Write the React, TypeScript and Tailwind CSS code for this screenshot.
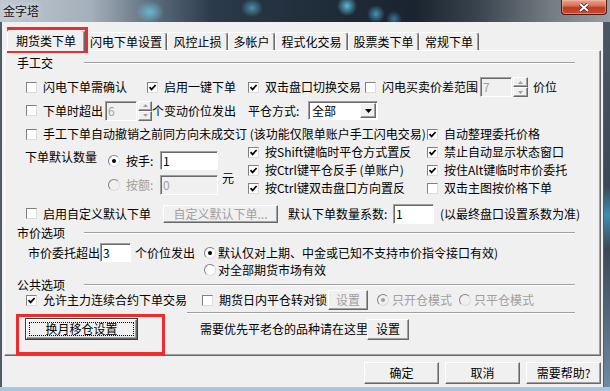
import React from 'react'

type Kids = { children?: React.ReactNode; className?: string }

function Box({ checked }: { checked?: boolean }) {
  return (
    <span className="flex h-[11px] w-[11px] shrink-0 items-center justify-center border border-t-[#808080] border-l-[#808080] border-r-[#dcdcdc] border-b-[#dcdcdc] bg-white">
      {checked && (
        <svg width="9" height="9" viewBox="0 0 9 9">
          <path d="M1.5 4.2 3.6 6.4 7.6 2" fill="none" stroke="#000" strokeWidth="1.7" />
        </svg>
      )}
    </span>
  )
}

function Radio({ checked, disabled }: { checked?: boolean; disabled?: boolean }) {
  return (
    <span
      className={`flex h-[12px] w-[12px] shrink-0 items-center justify-center rounded-full border border-t-[#808080] border-l-[#808080] border-r-[#dcdcdc] border-b-[#dcdcdc] ${disabled ? 'bg-[#f0f0f0]' : 'bg-white'}`}
    >
      {checked && <span className={`h-[4px] w-[4px] rounded-full ${disabled ? 'bg-[#a0a0a0]' : 'bg-black'}`} />}
    </span>
  )
}

function Check({ label, checked, className = '' }: { label: string; checked?: boolean; className?: string }) {
  return (
    <div className={`flex shrink-0 items-center whitespace-nowrap ${className}`}>
      <Box checked={checked} />
      <span className="ml-[6px]">{label}</span>
    </div>
  )
}

function Field({ value, disabled, className = '' }: { value: string; disabled?: boolean; className?: string }) {
  return (
    <div
      className={`flex shrink-0 items-center border border-t-[#a0a0a0] border-l-[#a0a0a0] border-r-white border-b-white pl-[2px] shadow-[inset_1px_1px_0_#696969] ${disabled ? 'bg-[#f0f0f0] text-[#a0a0a0]' : 'bg-white text-black'} ${className}`}
    >
      {value}
    </div>
  )
}

function SpinBtn({ up }: { up?: boolean }) {
  return (
    <div className="flex flex-1 items-center justify-center border border-t-white border-l-white border-r-[#696969] border-b-[#696969] bg-[#f0f0f0] shadow-[inset_-1px_-1px_0_#a0a0a0]">
      <svg width="5" height="3" viewBox="0 0 5 3">
        <path d={up ? 'M0 3h5L2.5 0z' : 'M0 0h5L2.5 3z'} fill="#a0a0a0" />
      </svg>
    </div>
  )
}

function Spin({ className = '' }: { className?: string }) {
  return (
    <div className={`flex shrink-0 flex-col ${className}`}>
      <SpinBtn up />
      <SpinBtn />
    </div>
  )
}

function Btn({ children, disabled, className = '' }: Kids & { disabled?: boolean }) {
  return (
    <div
      className={`flex shrink-0 items-center justify-center border border-t-white border-l-white border-r-[#696969] border-b-[#696969] bg-[#f0f0f0] shadow-[inset_-1px_-1px_0_#a0a0a0] whitespace-nowrap ${disabled ? 'text-[#a0a0a0]' : 'text-black'} ${className}`}
    >
      {children}
    </div>
  )
}

function DefaultBtn({ children, className = '' }: Kids) {
  return (
    <div className={`flex shrink-0 border border-[#3c3c3c] bg-[#f0f0f0] ${className}`}>
      <div className="flex flex-1 border border-t-white border-l-white border-r-[#696969] border-b-[#696969] p-[2px] shadow-[inset_-1px_-1px_0_#a0a0a0]">
        <div className="flex flex-1 items-center justify-center border border-dotted border-black">{children}</div>
      </div>
    </div>
  )
}

function Group({ label, className = '' }: { label: string; className?: string }) {
  return (
    <div className={`flex items-center pl-[12px] ${className}`}>
      <span className="w-[67px] shrink-0">{label}</span>
      <div className="h-[2px] w-[491px] border-t border-b border-t-[#a0a0a0] border-b-white" />
    </div>
  )
}

function Tab({ label, active, className = '' }: { label: string; active?: boolean; className?: string }) {
  return (
    <div
      className={`flex shrink-0 items-center justify-center rounded-t-[3px] border border-b-0 border-t-white border-l-white border-r-[#696969] bg-[#f0f0f0] shadow-[inset_-1px_0_0_#a0a0a0] ${active ? 'relative z-10 -mb-[1px] h-[21px]' : 'h-[18px]'} ${className}`}
    >
      {label}
    </div>
  )
}

export default function App() {
  return (
    <div className="relative flex h-[391px] w-[610px] flex-col overflow-hidden whitespace-nowrap bg-[#56636f] font-['Noto_Sans_CJK_SC',sans-serif] text-[12px] leading-[14px] text-black">
      {/* title bar */}
      <div className="flex h-[22px] shrink-0 items-start bg-[radial-gradient(ellipse_14px_11px_at_150px_12px,rgba(110,200,230,0.8),transparent),radial-gradient(ellipse_11px_9px_at_252px_8px,rgba(90,180,215,0.7),transparent),radial-gradient(ellipse_10px_10px_at_347px_6px,rgba(100,200,230,0.9),transparent),radial-gradient(ellipse_9px_9px_at_376px_14px,rgba(80,175,215,0.8),transparent),radial-gradient(ellipse_8px_8px_at_394px_19px,rgba(70,150,205,0.7),transparent),linear-gradient(90deg,#bfc8d0_0%,#a3afba_15%,#5e6e7e_25%,#2a3a4a_35%,#1e2b38_55%,#1a2430_68%,#38434d_78%,#737b82_90%,#989ea3_100%)]">
        <span className="ml-[3px] mt-[4px] text-[#111] [text-shadow:0_0_6px_#ffffff]">金字塔</span>
        <div className="ml-auto mr-[3px] flex h-[15px] w-[46px] items-center justify-center rounded-b-[4px] border border-t-0 border-[#4a1c14] bg-[linear-gradient(180deg,#e9a493_0%,#d8735d_40%,#c13b22_55%,#cc4a31_100%)] shadow-[inset_0_0_0_1px_rgba(255,200,180,0.45)]">
          <svg width="12" height="9" viewBox="0 0 12 9">
            <path d="M2 1l8 7M10 1L2 8" stroke="#3a2a2a" strokeWidth="3.4" />
            <path d="M2 1l8 7M10 1L2 8" stroke="#fff" strokeWidth="2" />
          </svg>
        </div>
      </div>

      <div className="flex flex-1">
        <div className="w-[2px] bg-[#4f5c69]" />

        {/* client area */}
        <div className="flex w-[601px] flex-col bg-[#f0f0f0]">
          <div className="mt-[8px] flex h-[20px] items-end pl-[5px]">
            <Tab label="期货类下单" active className="w-[78px]" />
            <Tab label="闪电下单设置" className="w-[82px]" />
            <Tab label="风控止损" className="w-[61px]" />
            <Tab label="多帐户" className="w-[47px]" />
            <Tab label="程式化交易" className="w-[73px]" />
            <Tab label="股票类下单" className="w-[71px]" />
            <Tab label="常规下单" className="w-[60px]" />
          </div>

          <div className="ml-[2px] flex h-[306px] w-[597px] flex-col border border-t-white border-l-white border-r-[#696969] border-b-[#696969] shadow-[inset_-1px_-1px_0_#a0a0a0]">
            <Group label="手工交" className="mt-[5px] h-[14px]" />

            <div className="mt-[7px] flex h-[20px] items-center pl-[21px]">
              <Check label="闪电下单需确认" className="w-[121px]" />
              <Check label="启用一键下单" checked className="w-[101px]" />
              <Check label="双击盘口切换交易" checked className="w-[117px]" />
              <Check label="闪电买卖价差范围" className="w-[115px]" />
              <Field value="7" disabled className="h-[20px] w-[32px]" />
              <Spin className="ml-[1px] h-[20px] w-[15px]" />
              <span className="ml-[5px]">价位</span>
            </div>

            <div className="mt-[3px] flex h-[21px] items-center pl-[21px]">
              <Check label="下单时超出" className="w-[79px]" />
              <Field value="6" disabled className="h-[20px] w-[32px]" />
              <Spin className="ml-[1px] h-[20px] w-[14px]" />
              <span className="w-[96px] shrink-0">个变动价位发出</span>
              <span className="w-[60px] shrink-0">平仓方式:</span>
              <div className="flex h-[19px] w-[70px] items-center border border-t-[#a0a0a0] border-l-[#a0a0a0] border-r-white border-b-white bg-white shadow-[inset_1px_1px_0_#696969]">
                <span className="flex-1 pl-[3px]">全部</span>
                <div className="mr-[1px] flex h-[15px] w-[16px] items-center justify-center border border-t-white border-l-white border-r-[#696969] border-b-[#696969] bg-[#f0f0f0] shadow-[inset_-1px_-1px_0_#a0a0a0]">
                  <svg width="7" height="4" viewBox="0 0 7 4">
                    <path d="M0 0h7L3.5 4z" fill="#000" />
                  </svg>
                </div>
              </div>
            </div>

            <div className="mt-[5px] flex h-[16px] items-center pl-[21px]">
              <Check label="手工下单自动撤销之前同方向未成交订 (该功能仅限单账户手工闪电交易)" className="w-[401px]" />
              <Check label="自动整理委托价格" checked />
            </div>

            <div className="mt-[1px] flex h-[54px] pl-[20px]">
              <div className="w-[83px] shrink-0 pt-[7px]">下单默认数量</div>
              <div className="flex w-[110px] shrink-0 flex-col">
                <div className="mt-[8px] flex h-[19px] items-center">
                  <Radio checked />
                  <span className="ml-[6px] w-[34px]">按手:</span>
                  <Field value="1" className="h-[19px] w-[58px]" />
                </div>
                <div className="mt-[5px] flex h-[20px] items-center text-[#a0a0a0]">
                  <Radio disabled />
                  <span className="ml-[6px] w-[34px]">按额:</span>
                  <Field value="0" disabled className="h-[20px] w-[58px]" />
                </div>
              </div>
              <div className="w-[30px] shrink-0 pl-[4px] pt-[28px]">元</div>
              <div className="flex w-[179px] shrink-0 flex-col">
                <Check label="按Shift键临时平仓方式置反" checked className="h-[18px]" />
                <Check label="按Ctrl键平仓反手 (单账户)" checked className="h-[18px]" />
                <Check label="按Ctrl键双击盘口方向置反" checked className="h-[18px]" />
              </div>
              <div className="flex flex-col">
                <Check label="禁止自动显示状态窗口" checked className="h-[18px]" />
                <Check label="按住Alt键临时市价委托" checked className="h-[18px]" />
                <Check label="双击主图按价格下单" className="h-[18px]" />
              </div>
            </div>

            <div className="mt-[6px] flex h-[21px] items-center pl-[21px]">
              <Check label="启用自定义默认下单" className="w-[137px]" />
              <Btn disabled className="h-[18px] w-[115px]">自定义默认下单...</Btn>
              <span className="ml-[10px] w-[105px] shrink-0">默认下单数量系数:</span>
              <Field value="1" className="h-[20px] w-[41px]" />
              <span className="ml-[6px]">(以最终盘口设置系数为准)</span>
            </div>

            <Group label="市价选项" className="mt-[2px] h-[14px]" />

            <div className="mt-[3px] flex h-[19px] items-center pl-[23px]">
              <span className="w-[72px] shrink-0">市价委托超出</span>
              <Field value="3" className="h-[19px] w-[31px]" />
              <span className="ml-[4px] w-[69px] shrink-0">个价位发出</span>
              <Radio checked />
              <span className="ml-[2px]">默认仅对上期、中金或已知不支持市价指令接口有效)</span>
            </div>
            <div className="flex h-[16px] items-center pl-[199px]">
              <Radio />
              <span className="ml-[2px]">对全部期货市场有效</span>
            </div>

            <Group label="公共选项" className="mt-[1px] h-[12px]" />

            <div className="flex h-[18px] items-center pl-[21px]">
              <Check label="允许主力连续合约下单交易" checked className="w-[176px]" />
              <Check label="期货日内平仓转对锁" className="w-[126px]" />
              <Btn disabled className="h-[20px] w-[40px]">设置</Btn>
              <div className="ml-[9px] flex items-center text-[#a0a0a0]">
                <Radio checked disabled />
                <span className="ml-[3px] w-[67px]">只开仓模式</span>
                <Radio disabled />
                <span className="ml-[3px]">只平仓模式</span>
              </div>
            </div>

            <div className="ml-[182px] mt-[3px] h-[2px] w-[388px] border-t border-b border-t-[#a0a0a0] border-b-white" />

            <div className="mt-[4px] flex h-[22px] items-center pl-[20px]">
              <DefaultBtn className="h-[22px] w-[113px]">换月移仓设置</DefaultBtn>
              <span className="ml-[62px] w-[167px] shrink-0">需要优先平老仓的品种请在这里</span>
              <Btn className="h-[21px] w-[42px]">设置</Btn>
            </div>
          </div>

          <div className="mt-[6px] flex h-[22px] justify-end gap-[6px] pr-[2px]">
            <Btn className="h-[22px] w-[75px]">确定</Btn>
            <Btn className="h-[22px] w-[75px]">取消</Btn>
            <Btn className="h-[22px] w-[75px]">需要帮助?</Btn>
          </div>
        </div>

        <div className="flex-1 border-l border-l-[#5a5f66] bg-[linear-gradient(180deg,#4b5763_0%,#3b4855_45%,#3e8db0_53%,#3b4855_62%,#6f8aa3_100%)]" />
      </div>
      <div className="h-[4px] shrink-0 bg-[#a7c6e0]" />

      {/* annotation overlays */}
      <div className="pointer-events-none absolute left-[7px] top-[27px] h-[26px] w-[81px] border-[3px] border-[#ef2b2b]" />
      <div className="pointer-events-none absolute left-[16px] top-[314px] h-[41px] w-[149px] border-[3px] border-[#ef2b2b]" />
    </div>
  )
}
